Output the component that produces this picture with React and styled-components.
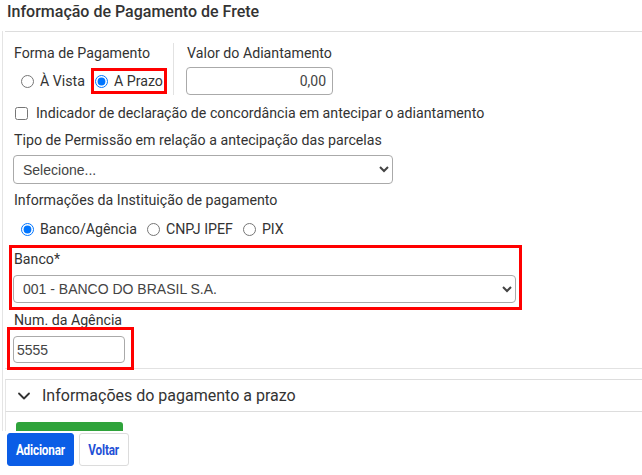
import React from "react"
import styled, { createGlobalStyle } from "styled-components"
import { ChevronDown } from "lucide-react"

const GlobalStyle = createGlobalStyle`
  html, body {
    margin: 0;
    padding: 0;
    background: #fff;
    overflow: hidden;
  }
  body {
    font-family: Roboto, "Liberation Sans", Arial, sans-serif;
    color: #333;
  }
  * {
    box-sizing: border-box;
  }
`

const Frame = styled.div`
  height: 475px;
  display: flex;
  flex-direction: column;
  overflow: hidden;
`

const Title = styled.h1`
  margin: 0;
  height: 31px;
  padding: 0 7px;
  font-size: 16px;
  font-weight: 500;
  line-height: 24px;
  color: #333;
`

const Scroller = styled.div`
  flex: 1;
  overflow: hidden;
  margin-left: 2px;
  border-left: 1px solid #e4e4e4;
`

const Panel = styled.section`
  margin-left: 2px;
  border-top: 1px solid #ddd;
  border-bottom: 1px solid #e2e2e2;
  padding: 11px 0 5px 8px;
`

const Label = styled.div`
  font-size: 14.2px;
  line-height: 20px;
  padding-left: 1px;
  margin-top: ${(p) => p.$top || 0}px;
`

const TopRow = styled.div`
  display: flex;
`

const PayColumn = styled.div`
  width: 161px;
  border-right: 1px solid #e2e2e2;
  display: flex;
  flex-direction: column;
  gap: 4px;
`

const ValueColumn = styled.div`
  padding-left: 12px;
  display: flex;
  flex-direction: column;
  gap: 4px;
`

const RadioGroup = styled.div`
  display: flex;
  align-items: center;
  gap: 10px;
  height: ${(p) => p.$height || 20}px;
  padding-left: 8px;
  margin-top: ${(p) => p.$top || 0}px;
`

const RadioLabel = styled.label`
  display: flex;
  align-items: center;
  gap: 6px;
  font-size: 14.2px;
  line-height: 20px;
  input {
    margin: 0;
    width: 13px;
    height: 13px;
    accent-color: #0075ff;
  }
`

const Highlight = styled.span`
  position: relative;
  display: ${(p) => (p.$block ? "block" : "inline-flex")};
  width: ${(p) => (p.$width ? `${p.$width}px` : "auto")};
  &::after {
    content: "";
    position: absolute;
    top: ${(p) => p.$t}px;
    right: ${(p) => p.$r}px;
    bottom: ${(p) => p.$b}px;
    left: ${(p) => p.$l}px;
    border: 3px solid #f00;
    pointer-events: none;
  }
`

const TextInput = styled.input`
  display: block;
  width: ${(p) => p.$width}px;
  height: ${(p) => p.$height || 28}px;
  border: 1px solid #aaa;
  border-radius: 4px;
  padding: 0 ${(p) => (p.$right ? 6 : 3)}px;
  font-family: ${(p) => (p.$right ? "Roboto" : '"Liberation Sans"')}, Arial, sans-serif;
  font-size: 14px;
  color: #444;
  text-align: ${(p) => (p.$right ? "right" : "left")};
  background: #fff;
  outline: none;
`

const CheckRow = styled.label`
  display: flex;
  align-items: center;
  gap: 8px;
  margin-top: 8px;
  padding-left: 2px;
  font-size: 14.2px;
  line-height: 20px;
  input {
    margin: 0;
    width: 13px;
    height: 13px;
  }
`

const Select = styled.select`
  display: block;
  width: ${(p) => p.$width}px;
  height: ${(p) => p.$height || 28}px;
  margin-top: ${(p) => p.$top || 0}px;
  border: 1px solid #aaa;
  border-radius: 4px;
  padding: 0 5px;
  font-family: "Liberation Sans", Arial, sans-serif;
  font-size: 14px;
  color: #444;
  background: #fff;
`

const Accordion = styled.div`
  margin: 10px 0 0 2px;
`

const AccordionHead = styled.div`
  height: 33px;
  display: flex;
  align-items: center;
  gap: 8px;
  padding-left: 8px;
  border-top: 1px solid #ddd;
  border-bottom: 1px solid #ddd;
  border-left: 1px solid #e6e6e6;
  font-size: 16px;
  color: #333;
`

const AccordionBody = styled.div`
  padding: 10px 0 0 10px;
  border-left: 1px solid #e6e6e6;
`

const GreenButton = styled.button`
  width: 107px;
  height: 33px;
  border: none;
  border-radius: 3px;
  background: #2fa33b;
`

const Footer = styled.footer`
  height: 44px;
  flex-shrink: 0;
  background: #fff;
  display: flex;
  gap: 5px;
  padding: 2px 7px 0;
  align-items: flex-start;
`

const Button = styled.button`
  height: 33px;
  width: ${(p) => p.$width}px;
  border-radius: 3px;
  border: 1px solid ${(p) => (p.$primary ? "#0b5de6" : "#dcdcdc")};
  background: ${(p) => (p.$primary ? "#0b5de6" : "#fff")};
  color: ${(p) => (p.$primary ? "#fff" : "#1f50d6")};
  font-family: Roboto, Arial, sans-serif;
  font-size: 15px;
  font-weight: 700;
  padding: 0;
  span {
    display: inline-block;
    transform: scaleX(0.78);
    letter-spacing: -0.2px;
  }
`

export default function App() {
  return (
    <>
      <GlobalStyle />
      <Frame>
        <Title>Informação de Pagamento de Frete</Title>
        <Scroller>
          <Panel>
            <TopRow>
              <PayColumn>
                <Label>Forma de Pagamento</Label>
                <RadioGroup $height={28}>
                  <RadioLabel>
                    <input type="radio" name="forma" />À Vista
                  </RadioLabel>
                  <Highlight $t={-3} $r={-4} $b={-3} $l={-4}>
                    <RadioLabel>
                      <input type="radio" name="forma" defaultChecked />A Prazo
                    </RadioLabel>
                  </Highlight>
                </RadioGroup>
              </PayColumn>
              <ValueColumn>
                <Label>Valor do Adiantamento</Label>
                <TextInput $width={147} $right defaultValue="0,00" />
              </ValueColumn>
            </TopRow>

            <CheckRow>
              <input type="checkbox" />
              Indicador de declaração de concordância em antecipar o adiantamento
            </CheckRow>

            <Label $top={7}>Tipo de Permissão em relação a antecipação das parcelas</Label>
            <Select $width={380} $height={29} $top={5} defaultValue="">
              <option value="">Selecione...</option>
            </Select>

            <Label $top={6}>Informações da Instituição de pagamento</Label>
            <RadioGroup $top={9}>
              <RadioLabel>
                <input type="radio" name="inst" defaultChecked />Banco/Agência
              </RadioLabel>
              <RadioLabel>
                <input type="radio" name="inst" />CNPJ IPEF
              </RadioLabel>
              <RadioLabel>
                <input type="radio" name="inst" />PIX
              </RadioLabel>
            </RadioGroup>

            <Highlight $block $width={503} $t={-4} $r={-6} $b={-7} $l={-4} style={{ marginTop: 10 }}>
              <Label>Banco*</Label>
              <Select $width={503} $top={6} defaultValue="001">
                <option value="001">001 - BANCO DO BRASIL S.A.</option>
              </Select>
            </Highlight>

            <Label $top={7}>Num. da Agência</Label>
            <Highlight $block $width={112} $t={-9} $r={-9} $b={-7} $l={-6} style={{ marginTop: 6 }}>
              <TextInput $width={112} $height={27} defaultValue="5555" />
            </Highlight>
          </Panel>

          <Accordion>
            <AccordionHead>
              <ChevronDown size={20} strokeWidth={2.2} color="#333" />
              Informações do pagamento a prazo
            </AccordionHead>
            <AccordionBody>
              <GreenButton />
            </AccordionBody>
          </Accordion>
        </Scroller>
        <Footer>
          <Button $primary $width={67}>
            <span>Adicionar</span>
          </Button>
          <Button $width={50}>
            <span>Voltar</span>
          </Button>
        </Footer>
      </Frame>
    </>
  )
}
